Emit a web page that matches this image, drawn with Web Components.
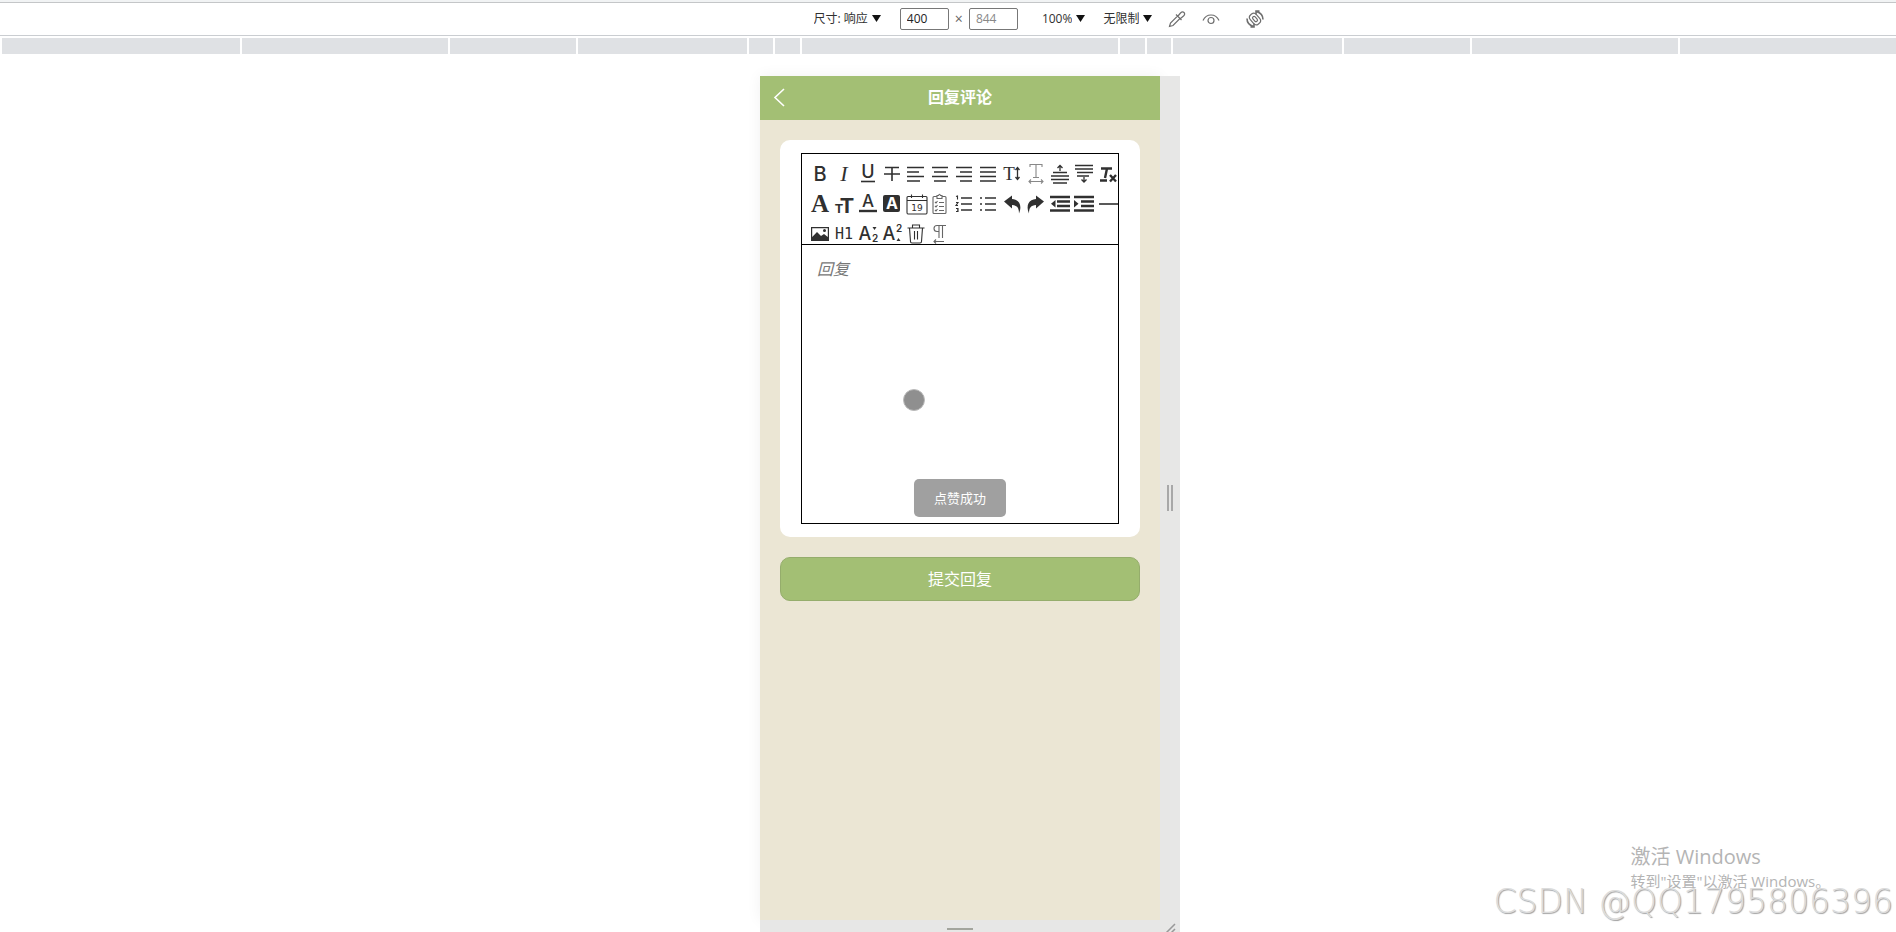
<!DOCTYPE html>
<html lang="zh-CN">
<head>
<meta charset="utf-8">
<meta name="viewport" content="width=device-width, initial-scale=1">
<title>回复评论</title>
<style>
    html, body {
        margin: 0;
        height: 100%;
    }

    body {
        overflow: hidden;
        background: #fff;
        font-family: "Open Sans", "Noto Sans CJK SC", sans-serif;
        color: #303030;
    }
</style>
</head>
<body>
<preview-window></preview-window>

<script>
// one 20x20 drawing for every button of the editor, in reading order
const lines = (...rows) => `<path class="l" d="${rows.map(([x1, x2, y]) => `M${x1} ${y}H${x2}`).join("")}"/>`;

const TOOLS = [
    ["加粗", `<text x="10" y="17" font-family="Inter" font-size="20" font-weight="500">B</text>`],
    ["斜体", `<text x="10" y="17" font-family="Liberation Serif" font-style="italic" font-size="22">I</text>`],
    ["下划线", `<text x="10" y="14" font-family="Inter" font-size="18" font-weight="500">U</text>${lines([3, 17, 17.5])}`],
    ["删除线", `<path class="l" d="M3 3.500H17M2 10H18M10 3V17"/>`],
    ["左对齐", lines([1, 18, 3.5], [1, 13, 8], [1, 18, 12.5], [1, 14, 17])],
    ["居中", lines([2, 18, 3.5], [4, 16, 8], [2, 18, 12.5], [4, 16, 17])],
    ["右对齐", lines([2, 18, 3.5], [6, 18, 8], [2, 18, 12.5], [6, 18, 17])],
    ["两端对齐", lines([2, 18, 3.5], [2, 18, 8], [2, 18, 12.5], [2, 18, 17])],
    ["行高", `<text x="7" y="16" font-family="Liberation Serif" font-size="19">T</text><path class="t dark" d="M15.500 4V15M13.500 6L15.500 3.500L17.500 6M13.500 13L15.500 15.500L17.500 13"/>`],
    ["字间距", `<path class="t faint" d="M4 3V.5H16V3M10 .5V13.500M7 13.500H13M3 17.500H17M5 15.500L3 17.500L5 19.500M15 15.500L17 17.500L15 19.500"/>`],
    ["段前距", `<path class="t dark" d="M10 7V1.500M7.500 4L10 1.500L12.500 4M3 8.500H17M1 12H19M1 15.500H19M3 19H17"/>`],
    ["段后距", `<path class="t dark" d="M1 1.500H19M1 5H19M3 8.500H19M3 12H15M10 13V18M7.500 15.500L10 18L12.500 15.500"/>`],
    ["清除格式", `<path class="b" d="M3 4.500H14M9 4.500L7 14M2 16.500H9M12 11L18 17.500M18 11L12 17.500"/>`],

    ["字体", `<text x="10" y="18" font-family="Liberation Serif" font-weight="700" font-size="25">A</text>`],
    ["字号", `<text x="5" y="19" font-family="Liberation Sans" font-weight="700" font-size="13">T</text><text x="13" y="19" font-family="Liberation Sans" font-weight="700" font-size="22">T</text>`],
    ["文字颜色", `<text x="10" y="13" font-family="Inter" font-weight="500" font-size="17">A</text><path class="b" d="M1 17H19"/>`],
    ["背景颜色", `<rect x="1" y="1" width="17" height="17" rx="2"/><text x="10" y="15" fill="#fff" font-family="Inter" font-weight="700" font-size="16">A</text>`],
    ["日期", `<path class="t" d="M1 3.500Q1 2.500 2 2.500H20Q21 2.500 21 3.500V18.500Q21 20 20 20H2Q1 20 1 18.500ZM1 6.500H21M5.500 .5V4M16.500 .5V4"/><text x="11" y="17" font-family="DejaVu Sans" font-size="9">19</text>`],
    ["待办", `<path class="t soft" d="M7 2.500H4Q3 2.500 3 3.500V18.500Q3 19.500 4 19.500H15Q16 19.500 16 18.500V3.500Q16 2.500 15 2.500H12M7 1.500H8.500Q9.500 -1 10.500 1.500H12V4.500H7ZM5 8L6 9L7.500 7M9 8.500H14M5 12L6 13L7.500 11M9 12.500H14M5 16L6 17L7.500 15M9 16.500H14"/>`],
    ["有序列表", `${lines([7, 18, 4], [7, 18, 10], [7, 18, 16])}<path class="t" d="M2 2.500L3.500 2V5.500M2 8.500H4L2 11.500H4M2 14.500H4V17.500H2M3 16H4"/>`],
    ["无序列表", `${lines([7, 18, 4], [7, 18, 10], [7, 18, 16])}<circle cx="3" cy="4" r="1"/><circle cx="3" cy="10" r="1"/><circle cx="3" cy="16" r="1"/>`],
    ["撤销", `<path d="M2 7.500L10 1.500V5C17 5.500 20.500 11 17 19.500C17 13.500 15 11.500 10 11V14.500Z"/>`],
    ["重做", `<path d="M18 7.500L10 1.500V5C3 5.500 -.5 11 3 19.500C3 13.500 5 11.500 10 11V14.500Z"/>`],
    ["减少缩进", `<path class="b" d="M0 3H20M7 7.500H20M7 12H20M0 16.500H20"/><path d="M1 9.700L5.500 6V13.500Z"/>`],
    ["增加缩进", `<path class="b" d="M0 3H20M7 7.500H20M7 12H20M0 16.500H20"/><path d="M4.500 9.700L0 6V13.500Z"/>`],
    ["分割线", `<path class="l" d="M1 10H20"/>`],

    ["图片", `<path fill-rule="evenodd" d="M1 3H19V17H1ZM2.200 4.200V13L7 8L11 12L14 10L17.800 13V4.200ZM13 6.500A1.500 1.500 0 1 0 16 6.500A1.500 1.500 0 1 0 13 6.500"/>`],
    ["标题", `<text x="10" y="15" font-family="DejaVu Sans Mono" font-size="15">H1</text>`],
    ["下标", `<text x="7" y="16" font-family="Inter" font-weight="500" font-size="18">A</text><text x="17" y="18" font-family="Inter" font-weight="600" font-size="10">2</text><path d="M14.500 3H18.500L16.500 6Z"/>`],
    ["上标", `<text x="7" y="16" font-family="Inter" font-weight="500" font-size="18">A</text><text x="17" y="8" font-family="Inter" font-weight="600" font-size="10">2</text><path d="M14.500 17H18.500L16.500 14Z"/>`],
    ["清空", `<path class="t" d="M1.500 4H18.500M6.500 4V1H13.500V4M3.500 4L4.500 17.500Q4.500 19 6 19H14Q15.500 19 15.500 17.500L16.500 4M8.500 7V15.500M11.500 7V15.500"/>`],
    ["文字方向", `<path class="t soft" d="M16 1.500H7A3 3 0 0 0 7 7.500H9M9 1.500V14M12.500 1.500V14M14 17.500H4M6 15.500L4 17.500L6 19.500"/>`],
];

class DeviceSelect extends HTMLElement {
    constructor() {
        super();
        this._shadowRoot = this.attachShadow({mode: "open"});
    }

    connectedCallback() {
        this._shadowRoot.innerHTML = `
        <style>
        :host {
            display: flex;
            align-items: center;
            gap: 4px;
        }

        select {
            appearance: none;
            field-sizing: content;
            margin: 0;
            padding: 0;
            border: 0;
            background: none;
            color: inherit;
            font: inherit;
        }

        svg {
            width: 9px;
            height: 7px;
        }
        </style>
        <select aria-label="${this.getAttribute("label")}"><option>${this.getAttribute("value")}</option></select>
        <svg viewBox="0 0 9 7" fill="#111"><path d="M0 0H9L4.500 7Z"/></svg>
        `;
    }
}

class DeviceToolbar extends HTMLElement {
    constructor() {
        super();
        this._shadowRoot = this.attachShadow({mode: "open"});
    }

    connectedCallback() {
        this._shadowRoot.innerHTML = `
        <style>
        :host {
            display: flex;
            align-items: center;
            justify-content: center;
            box-sizing: border-box;
            height: 36px;
            padding-left: 182px;
            border-top: 2px solid #f1f3f4;
            border-bottom: 1px solid #cacdd1;
            box-shadow: inset 0 1px #c4c6c8;
            background: #fff;
            font-size: 12px;
            line-height: 16px;
        }

        input {
            box-sizing: border-box;
            width: 49px;
            height: 22px;
            margin: 0;
            padding: 0 6px;
            border: 1px solid #777;
            border-radius: 2px;
            background: #fff;
            color: #222;
            font: inherit;
        }

        .height {
            color: #888;
        }

        .size {
            display: flex;
            align-items: center;
            gap: 6px;
            margin: 0 24px 0 19px;
            color: #666;
        }

        .size span {
            font-size: 14px;
        }

        .throttle {
            margin: 0 16px 0 18px;
        }

        button {
            display: flex;
            margin: 0 16px 0 0;
            padding: 0;
            border: 0;
            background: none;
        }

        button:last-child {
            margin: 0 0 0 10px;
        }

        svg {
            width: 18px;
            height: 18px;
            fill: none;
            stroke: #6e6e6e;
            stroke-width: 1.2;
        }
        </style>
        <device-select label="尺寸" value="尺寸: 响应"></device-select>
        <div class="size">
            <input aria-label="宽度" value="400">
            <span>×</span>
            <input class="height" aria-label="高度" value="844">
        </div>
        <device-select label="缩放" value="100%"></device-select>
        <device-select class="throttle" label="节流" value="无限制"></device-select>
        <button aria-label="取色器"><svg viewBox="0 0 18 18"><path d="M1.500 16.500L2.500 13L9.500 6L12 8.500L5 15.500ZM8 4.500L13.500 10M10 6L12.500 3Q14.500 1 16 2.500Q17.500 4 15.500 6L12.500 8.500"/></svg></button>
        <button aria-label="模拟视觉"><svg viewBox="0 0 18 18"><path d="M1 10.500Q3.500 5 9 5Q14.500 5 17 10.500"/><circle cx="9" cy="10.500" r="3"/></svg></button>
        <button aria-label="旋转"><svg viewBox="0 0 18 18"><g transform="rotate(-40 9 9)"><rect x="5" y="3" width="8" height="12" rx="3.500"/><rect x="7.500" y="6" width="3" height="6" rx="1.500"/></g><path stroke-width="1.600" d="M1 8.500Q1 14.500 7.500 16.500M8 13.500V17H4.500M17 9.500Q17 3.500 10.500 1.500M10 4.500V1H13.500"/></svg></button>
        `;
    }
}

class MediaBar extends HTMLElement {
    constructor() {
        super();
        this._shadowRoot = this.attachShadow({mode: "open"});
    }

    connectedCallback() {
        this._shadowRoot.innerHTML = `
        <style>
        :host {
            display: block;
            overflow: hidden;
            padding: 2px 0 0 2px;
        }

        div {
            display: grid;
            grid-template-columns: 1fr 206px 126px 169px 24px 25px 316px 25px 24px 169px 126px 206px 1fr;
            gap: 2px;
            height: 16px;
            margin-right: -22px;
        }

        i {
            background: #dfe1e4;
        }
        </style>
        <div>${"<i></i>".repeat(13)}</div>
        `;
    }
}

class PageHeader extends HTMLElement {
    constructor() {
        super();
        this._shadowRoot = this.attachShadow({mode: "open"});
    }

    connectedCallback() {
        this._shadowRoot.innerHTML = `
        <style>
        :host {
            display: grid;
            grid-template-columns: 44px 1fr 44px;
            align-items: center;
            box-sizing: border-box;
            height: 44px;
            padding-bottom: 2px;
            background: #a3bf74;
            color: #fff;
        }

        button {
            display: flex;
            padding: 0 0 0 12px;
            border: 0;
            background: none;
        }

        svg {
            width: 14px;
            height: 20px;
            fill: none;
            stroke: #fff;
            stroke-width: 1.6;
        }

        h1 {
            margin: 0;
            font-size: 16px;
            line-height: 24px;
            font-weight: 700;
            text-align: center;
        }
        </style>
        <button aria-label="返回"><svg viewBox="0 0 14 20"><path d="M12 2L3 10.500L12 19"/></svg></button>
        <h1><slot></slot></h1>
        `;
    }
}

class RichEditor extends HTMLElement {
    constructor() {
        super();
        this._shadowRoot = this.attachShadow({mode: "open"});
    }

    static css() {
        return `
        <style>
        :host {
            display: block;
            padding: 13px 21px;
            border-radius: 10px;
            background: #fff;
        }

        .frame {
            border: 1px solid #000;
        }

        .tools {
            display: grid;
            grid-template-columns: repeat(13, 20px);
            grid-auto-rows: 20px;
            gap: 10px 4px;
            padding: 10px 0 0 8px;
            border-bottom: 1px solid #000;
        }

        button {
            display: flex;
            padding: 0;
            border: 0;
            background: none;
        }

        svg {
            width: 20px;
            height: 20px;
            overflow: visible;
            fill: #303030;
        }

        text {
            text-anchor: middle;
        }

        .l, .b, .t {
            fill: none;
            stroke: #303030;
            stroke-width: 1.6;
        }

        .b {
            stroke-width: 2.4;
        }

        .t {
            stroke-width: 1.1;
        }

        .dark {
            stroke-width: 1.3;
        }

        .soft {
            stroke: #666;
        }

        .faint {
            stroke: #888;
        }

        textarea {
            display: block;
            box-sizing: border-box;
            width: 100%;
            height: 278px;
            padding: 12px 15px;
            border: 0;
            outline: 0;
            resize: none;
            background: none;
            color: #303030;
            font: inherit;
            font-size: 16px;
            line-height: 24px;
        }

        textarea::placeholder {
            color: #777;
            font-style: italic;
        }
        </style>
        `;
    }

    connectedCallback() {
        const label = this.getAttribute("placeholder");
        this._shadowRoot.innerHTML = RichEditor.css() + `
        <div class="frame">
            <div class="tools">
                ${TOOLS.map(([name, art]) => `<button aria-label="${name}"><svg viewBox="0 0 20 20">${art}</svg></button>`).join("")}
            </div>
            <textarea aria-label="${label}" placeholder="${label}"></textarea>
        </div>
        `;
    }
}

class SubmitButton extends HTMLElement {
    constructor() {
        super();
        this._shadowRoot = this.attachShadow({mode: "open"});
    }

    connectedCallback() {
        this._shadowRoot.innerHTML = `
        <style>
        :host {
            display: block;
        }

        button {
            display: block;
            width: 100%;
            height: 44px;
            padding: 0 0 2px;
            border: 1px solid #95ad6c;
            border-radius: 10px;
            background: #a3bf74;
            color: #fff;
            font: inherit;
            font-size: 16px;
        }
        </style>
        <button><slot></slot></button>
        `;
    }
}

class ToastMessage extends HTMLElement {
    constructor() {
        super();
        this._shadowRoot = this.attachShadow({mode: "open"});
    }

    connectedCallback() {
        this._shadowRoot.innerHTML = `
        <style>
        :host {
            display: block;
            padding: 9px 20px;
            border-radius: 5px;
            background: #a0a0a0;
            color: #fff;
            font-size: 13px;
            line-height: 20px;
            white-space: nowrap;
        }
        </style>
        <slot></slot>
        `;
    }
}

class DeviceFrame extends HTMLElement {
    constructor() {
        super();
        this._shadowRoot = this.attachShadow({mode: "open"});
    }

    connectedCallback() {
        this._shadowRoot.innerHTML = `
        <style>
        :host {
            display: grid;
            grid-template-columns: 400px 20px;
            grid-template-rows: 1fr 12px;
            justify-content: center;
            padding: 22px 0 0 44px;
        }

        .screen {
            position: relative;
            background: #ebe6d4;
            box-shadow: 0 0 14px rgba(0, 0, 0, 0.06);
        }

        .grip {
            display: flex;
            align-items: center;
            justify-content: center;
            background: #e7e7e6;
            z-index: 1;
        }

        .side {
            gap: 2px;
        }

        .side i {
            width: 2px;
            height: 26px;
            background: #a8a8a8;
        }

        .bottom {
            align-items: flex-end;
        }

        .bottom i {
            width: 26px;
            height: 2px;
            margin-bottom: 2px;
            background: #a3a59d;
        }

        svg {
            width: 12px;
            height: 12px;
            stroke: #999;
            stroke-width: 1.5;
        }
        </style>
        <div class="screen"><slot></slot></div>
        <div class="grip side"><i></i><i></i></div>
        <div class="grip bottom"><i></i></div>
        <div class="grip"><svg viewBox="0 0 12 12"><path d="M2 13L11 4M7 13L11 9"/></svg></div>
        `;
    }
}

class DesktopMark extends HTMLElement {
    constructor() {
        super();
        this._shadowRoot = this.attachShadow({mode: "open"});
    }

    connectedCallback() {
        this._shadowRoot.innerHTML = `
        <style>
        :host {
            display: block;
            color: #b4b4b4;
            white-space: nowrap;
        }

        p {
            margin: 0 0 0 137px;
            font-size: 20px;
            line-height: 26px;
        }

        .hint {
            font-size: 15px;
            line-height: 22px;
        }

        .user {
            margin: -10px 0 0;
            font-family: "DejaVu Sans", sans-serif;
            font-size: 33px;
            font-weight: 200;
            line-height: 40px;
            color: #dcdcdc;
            text-shadow: 1px 1px 1px #a0a0a0;
        }
        </style>
        <p>激活 Windows</p>
        <p class="hint">转到"设置"以激活 Windows。</p>
        <p class="user">CSDN @QQ1795806396</p>
        `;
    }
}

class PreviewWindow extends HTMLElement {
    constructor() {
        super();
        this._shadowRoot = this.attachShadow({mode: "open"});
    }

    connectedCallback() {
        this._shadowRoot.innerHTML = `
        <style>
        :host {
            display: flex;
            flex-direction: column;
            position: relative;
            height: 100%;
        }

        device-frame {
            flex: 1;
        }

        main {
            display: grid;
            gap: 20px;
            padding: 20px;
        }

        toast-message {
            position: absolute;
            top: 50%;
            left: 50%;
            transform: translate(-50%, -50%);
        }

        .touch {
            position: absolute;
            top: 313px;
            left: 143px;
            width: 20px;
            height: 20px;
            border: 1px solid #bbb;
            border-radius: 50%;
            background: #8f8f8f;
        }

        desktop-mark {
            position: absolute;
            right: 3px;
            bottom: 10px;
        }
        </style>
        <device-toolbar></device-toolbar>
        <media-bar></media-bar>
        <device-frame>
            <page-header>回复评论</page-header>
            <main>
                <rich-editor placeholder="回复"></rich-editor>
                <submit-button>提交回复</submit-button>
            </main>
            <div class="touch"></div>
            <toast-message>点赞成功</toast-message>
        </device-frame>
        <desktop-mark></desktop-mark>
        `;
    }
}

customElements.define("device-select", DeviceSelect);
customElements.define("device-toolbar", DeviceToolbar);
customElements.define("media-bar", MediaBar);
customElements.define("page-header", PageHeader);
customElements.define("rich-editor", RichEditor);
customElements.define("submit-button", SubmitButton);
customElements.define("toast-message", ToastMessage);
customElements.define("device-frame", DeviceFrame);
customElements.define("desktop-mark", DesktopMark);
customElements.define("preview-window", PreviewWindow);
</script>
</body>
</html>
